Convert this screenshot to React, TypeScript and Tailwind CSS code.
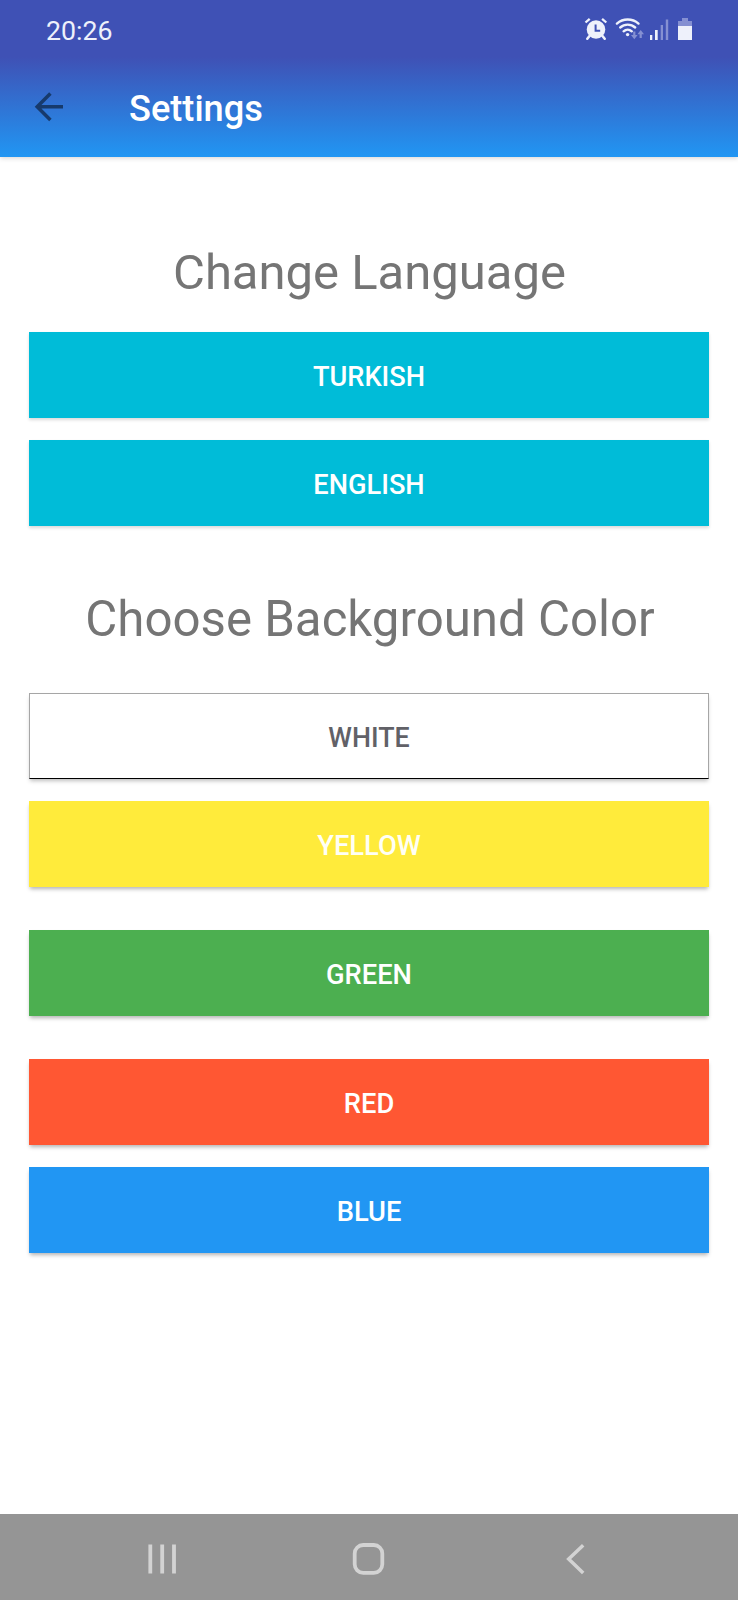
import React from "react";

type ColorButtonProps = { label: string; className: string };

function ColorButton({ label, className }: ColorButtonProps) {
  return (
    <button
      type="button"
      className={`block h-[86px] w-full text-center leading-[82px] font-medium ${className}`}
    >
      {label}
    </button>
  );
}

function StatusIcons() {
  return (
    <svg className="h-[60px] w-[168px]" viewBox="0 0 168 60" fill="none" stroke="#eef1fb">
      <circle cx="26" cy="29.5" r="9.3" fill="#eef1fb" stroke="none" />
      <path d="M15.5 22.5l4.2-3.7M36.3 22.5l-4.2-3.7" strokeWidth="2.3" />
      <path d="M19.5 36l-2.2 2.7M32.5 36l2.2 2.7" strokeWidth="2.6" strokeLinecap="round" />
      <path d="M25.6 24.5v6.2h4.6" stroke="#3f51b5" strokeWidth="2" />
      <path d="M46.9 23.6a16.5 16.5 0 0 1 21.6 0" strokeWidth="2.4" strokeLinecap="round" />
      <path d="M50.2 27.5a11.2 11.2 0 0 1 15 0" strokeWidth="2.4" strokeLinecap="round" />
      <path d="M53.6 31.3a6 6 0 0 1 8.2 0" strokeWidth="2.4" strokeLinecap="round" />
      <circle cx="57.6" cy="34.6" r="1.7" fill="#eef1fb" stroke="none" />
      <g fill="#8590d2" stroke="none">
        <path d="M63.2 31.5h2.2v3.5h2.2l-3.3 4.2-3.3-4.2h2.2z" />
        <path d="M69.6 38h2.2v-3.8h2.2l-3.3-4.2-3.3 4.2h2.2z" />
      </g>
      <g fill="#eef1fb" stroke="none">
        <path d="M80 35h2.3v5H80z" />
        <path d="M85 30h2.7v10H85z" />
        <path d="M90.7 25h2.3v15h-2.3zM95.8 19.5h2.4V40h-2.4z" fill="#8590d2" />
        <path d="M112 18h6v3h4v5h-14v-5h4z" fill="#8590d2" />
        <path d="M108 26h14v14h-14z" />
      </g>
    </svg>
  );
}

function Header() {
  return (
    <header className="h-[157px] bg-[linear-gradient(to_bottom,#3f51b5_0px,#3f51b5_57px,#2196f3_157px)] shadow-[0_1px_5px_rgba(0,0,0,0.18)]">
      <div className="flex h-[60px] items-start justify-between pl-[46px]">
        <span className="pt-px text-[26.7px] leading-[60px] text-[#eef1fb]">20:26</span>
        <StatusIcons />
      </div>
      <div className="flex h-[97px] items-start">
        <svg className="mt-[32px] ml-[34px] h-[30px] w-[30px]" viewBox="0 0 30 30" fill="none" stroke="#173a6c" strokeWidth="3.5">
          <path d="M29 14.7H3M16.4 1.5L3.2 14.7l13.2 13.2" />
        </svg>
        <h1 className="ml-[65px] text-[36.2px] leading-[98px] font-medium text-white">Settings</h1>
      </div>
    </header>
  );
}

function NavigationBar() {
  return (
    <nav className="flex h-[86px] shrink-0 items-center bg-[#959595] text-[#d3d3d3]">
      <svg className="ml-[144px] h-[40px] w-[36px]" viewBox="0 0 36 40" fill="none" stroke="currentColor" strokeWidth="3.8">
        <path d="M6.3 7.5v29M18.2 7.5v29M30 7.5v29" />
      </svg>
      <svg className="ml-[169px] h-[40px] w-[40px]" viewBox="0 0 40 40" fill="none" stroke="currentColor" strokeWidth="3.8">
        <rect x="5.7" y="8" width="27.6" height="27.8" rx="8.5" />
      </svg>
      <svg className="ml-[171px] h-[40px] w-[30px]" viewBox="0 0 30 40" fill="none" stroke="currentColor" strokeWidth="3.5">
        <path d="M23.2 8.3L8.7 22l14.5 14" />
      </svg>
    </nav>
  );
}

export default function App() {
  return (
    <div className="flex h-[1600px] w-[738px] flex-col overflow-hidden bg-white font-['Roboto',sans-serif]">
      <Header />
      <main className="flex-1 px-[29px]">
        <h2 className="pt-[80px] pl-px text-center text-[49px] leading-[72px] whitespace-nowrap text-[#757575]">Change Language</h2>
        <div className="mt-[23px] flex flex-col gap-[22px]">
          <ColorButton label="TURKISH" className="bg-[#00bcd8] pt-[4px] text-[27.2px] text-white shadow-[0_2px_3px_rgba(0,0,0,0.15)]" />
          <ColorButton label="ENGLISH" className="bg-[#00bcd8] pt-[4px] text-[27.2px] text-white shadow-[0_2px_3px_rgba(0,0,0,0.15)]" />
        </div>
        <h2 className="mt-[57px] pl-[2px] text-center text-[49.2px] leading-[72px] whitespace-nowrap text-[#757575]">Choose Background Color</h2>
        <div className="mt-[38px] flex flex-col">
          <ColorButton label="WHITE" className="border border-[#a6a6a6] border-b-black bg-white pt-[3px] text-[26.8px] text-[#616167] shadow-[0_3px_4px_-1px_rgba(0,0,0,0.25)]" />
          <ColorButton label="YELLOW" className="mt-[22px] bg-[#ffeb3b] pt-[4px] text-[27.3px] text-[#fffff5] shadow-[0_3px_4px_-1px_rgba(0,0,0,0.3)]" />
          <ColorButton label="GREEN" className="mt-[43px] bg-[#4caf50] pt-[4px] text-[27.3px] text-white shadow-[0_3px_4px_-1px_rgba(0,0,0,0.3)]" />
          <ColorButton label="RED" className="mt-[43px] bg-[#ff5733] pt-[4px] text-[27.3px] text-white shadow-[0_3px_4px_-1px_rgba(0,0,0,0.3)]" />
          <ColorButton label="BLUE" className="mt-[22px] bg-[#2196f3] pt-[4px] text-[27.3px] text-white shadow-[0_3px_4px_-1px_rgba(0,0,0,0.3)]" />
        </div>
      </main>
      <NavigationBar />
    </div>
  );
}
